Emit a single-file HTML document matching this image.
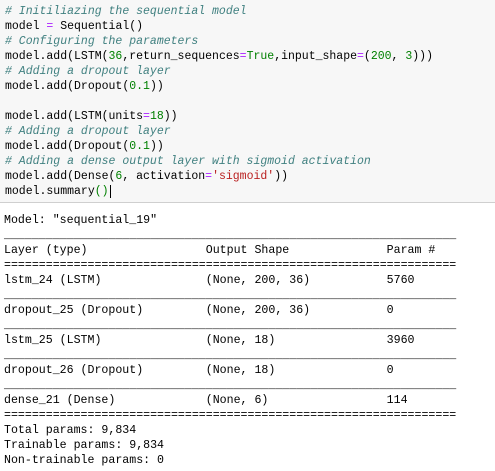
<!DOCTYPE html>
<html><head><style>
html,body{margin:0;padding:0;width:495px;height:471px;overflow:hidden;background:#fff}
pre{margin:0;font-family:"Liberation Mono",monospace;font-size:11.5px;line-height:15px;color:#000;white-space:pre}
#code{position:absolute;left:0;top:0;width:495px;height:203px;background:#f7f7f7;border-bottom:1px solid #cfcfcf;box-sizing:border-box}
#code pre{position:absolute;left:5px;top:4px}
#out{position:absolute;left:4px;top:213px;font-size:11.6px}
.c{color:#408080;font-style:italic}
.o{color:#aa22ff}
.n{color:#008000}
.k{color:#008000}
.s{color:#ba2121}
.cur{border-left:1px solid #000;margin-left:1px}
</style></head><body>
<div id="code"><pre><span class="c"># Initiliazing the sequential model</span>
model <span class="o">=</span> Sequential()
<span class="c"># Configuring the parameters</span>
model.add(LSTM(<span class="n">36</span>,return_sequences<span class="o">=</span><span class="k">True</span>,input_shape<span class="o">=</span>(<span class="n">200</span>, <span class="n">3</span>)))
<span class="c"># Adding a dropout layer</span>
model.add(Dropout(<span class="n">0.1</span>))

model.add(LSTM(units<span class="o">=</span><span class="n">18</span>))
<span class="c"># Adding a dropout layer</span>
model.add(Dropout(<span class="n">0.1</span>))
<span class="c"># Adding a dense output layer with sigmoid activation</span>
model.add(Dense(<span class="n">6</span>, activation<span class="o">=</span><span class="s">'sigmoid'</span>))
model.summary<span class="n">()</span><span class="cur"></span></pre></div>
<pre id="out">Model: "sequential_19"
_________________________________________________________________
Layer (type)                 Output Shape              Param #   
=================================================================
lstm_24 (LSTM)               (None, 200, 36)           5760      
_________________________________________________________________
dropout_25 (Dropout)         (None, 200, 36)           0         
_________________________________________________________________
lstm_25 (LSTM)               (None, 18)                3960      
_________________________________________________________________
dropout_26 (Dropout)         (None, 18)                0         
_________________________________________________________________
dense_21 (Dense)             (None, 6)                 114       
=================================================================
Total params: 9,834
Trainable params: 9,834
Non-trainable params: 0</pre>
</body></html>
